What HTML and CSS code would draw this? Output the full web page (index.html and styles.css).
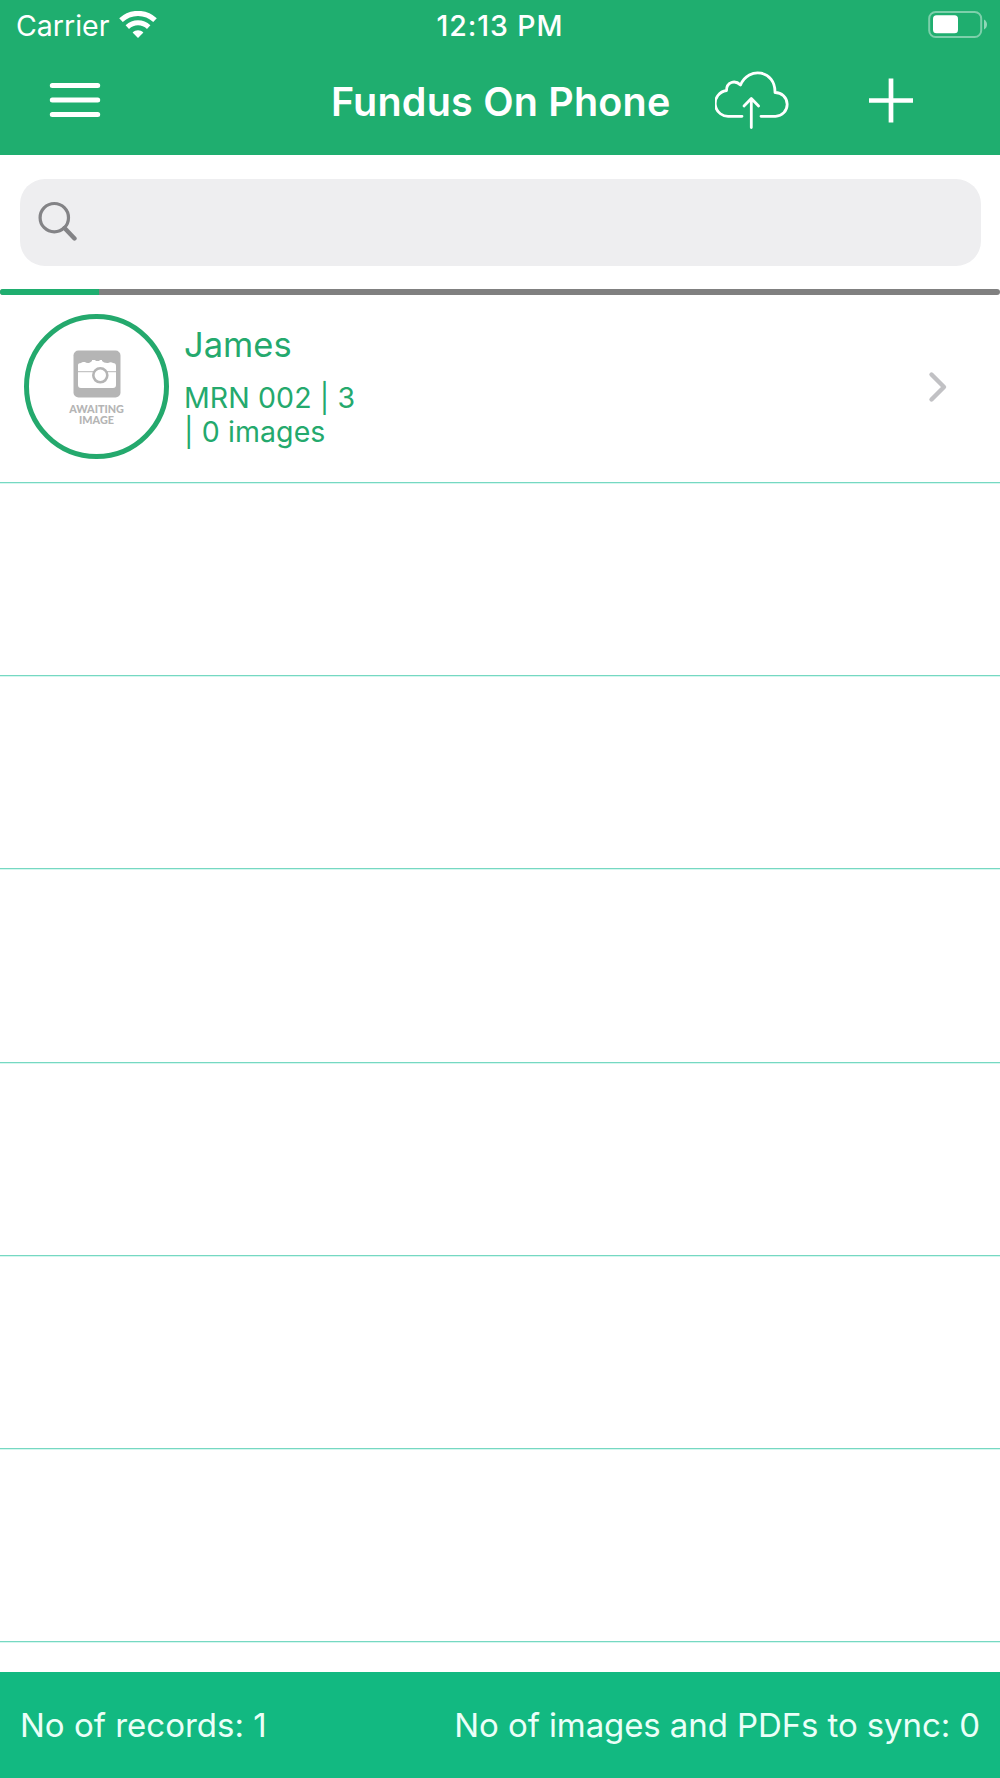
FILE: index.html
```html
<!DOCTYPE html>
<html lang="en">
<head>
<meta charset="utf-8">
<title>Fundus On Phone</title>
<link rel="stylesheet" href="styles.css">
</head>
<body>
<header class="header">
  <div class="status">
    <div class="status-left">
      <span class="carrier">Carrier</span>
      <svg class="wifi" width="38" height="28" viewBox="0 0 38 28" fill="none" stroke="#fff">
        <path d="M2 9.200C11.500 0.200 26.500 0.200 36 9.200" stroke-width="5.200"/>
        <path d="M8.300 16.200C14.500 10.400 23.500 10.400 29.700 16.200" stroke-width="5"/>
        <path d="M13.600 21.400C16.700 18.600 21.300 18.600 24.400 21.400L19 27Z" fill="#fff" stroke="none"/>
      </svg>
    </div>
    <span class="time">12:13 PM</span>
    <svg class="battery" width="60" height="30" viewBox="0 0 60 30">
      <rect x="2.200" y="2" width="52" height="25" rx="6.500" fill="none" stroke="#fff" stroke-opacity=".42" stroke-width="2"/>
      <rect x="6" y="5.300" width="25" height="18" rx="3.500" fill="#fff"/>
      <path d="M57 9.500C61 11.500 61 17.500 57 19.500Z" fill="#fff" fill-opacity=".5"/>
    </svg>
  </div>
  <nav class="nav">
    <button class="icon-button" aria-label="Menu">
      <svg width="52" height="36" viewBox="0 0 52 36" stroke="#fff" stroke-width="5" stroke-linecap="round">
        <path d="M3.300 3.500H48.700M3.300 18H48.700M3.300 32.500H48.700"/>
      </svg>
    </button>
    <h1 class="title">Fundus On Phone</h1>
    <div class="actions">
      <button class="icon-button" aria-label="Upload">
        <svg width="76" height="60" viewBox="0 0 76 60" fill="none" stroke="#fff" stroke-width="2.800" stroke-linecap="round" stroke-linejoin="round">
          <path d="M27 46.300H15A13 13 0 0 1 11.500 20.500C11.500 12 20 9.500 25.500 15C33.500 -4 60.500 0 60 22.500A11.900 11.900 0 0 1 60.500 46.300H46"/>
          <path d="M36.300 57.500V29M29 36L36.300 28.500L43.600 36"/>
        </svg>
      </button>
      <button class="icon-button" aria-label="Add">
        <svg width="46" height="46" viewBox="0 0 46 46" stroke="#fff" stroke-width="4.700">
          <path d="M1 23.500H45M23 1.500V45.500"/>
        </svg>
      </button>
    </div>
  </nav>
</header>
<div class="search">
  <svg width="40" height="40" viewBox="0 0 40 40" fill="none" stroke="#838386">
    <circle cx="16.300" cy="16.700" r="14.200" stroke-width="3.200"/>
    <path d="M26.500 27L36.500 37.500" stroke-width="4.400" stroke-linecap="round"/>
  </svg>
</div>
<div class="progress"><div class="progress-fill"></div></div>
<main class="list">
  <article class="row record">
    <div class="avatar">
      <svg width="48" height="48" viewBox="0 0 48 48">
        <rect width="47" height="47" rx="5" x=".5" y=".5" fill="#b5b5b5"/>
        <path d="M5 15Q5 13 8 13Q9 11.500 12 12Q13 13.300 16 13Q18 12 19 11V10H22L23 11H26L27 10H29V11Q31 13.300 35 13Q38 11.500 40 13Q43 13 43 16V35Q43 38 40 38H8Q5 38 5 35Z" fill="#fff"/>
        <path d="M5 21.700H43" stroke="#c5c5c5" stroke-width="1.200"/>
        <circle cx="27.300" cy="25.300" r="7" fill="#fff" stroke="#b5b5b5" stroke-width="2.600"/>
      </svg>
      <div class="await">
        <div>AWAITING</div>
        <div>IMAGE</div>
      </div>
    </div>
    <div class="details">
      <div class="name">James</div>
      <div class="meta">MRN 002 | 3<br>| 0 images</div>
    </div>
    <svg class="chevron" width="20" height="32" viewBox="0 0 20 32" fill="none" stroke="#c1c1c4" stroke-width="4.400" stroke-linecap="round" stroke-linejoin="round">
      <path d="M3.500 3.500L16 16L3.500 28.500"/>
    </svg>
  </article>
  <div class="row"></div>
  <div class="row"></div>
  <div class="row"></div>
  <div class="row"></div>
  <div class="row"></div>
  <div class="row"></div>
</main>
<footer class="footer">
  <span class="records">No of records: 1</span>
  <span class="sync">No of images and PDFs to sync: 0</span>
</footer>
</body>
</html>
```
FILE: styles.css
```css
* { box-sizing: border-box; }
body {
  margin: 0;
  height: 1778px;
  display: flex;
  flex-direction: column;
  overflow: hidden;
  background: #fff;
  font-family: Inter, "Liberation Sans", sans-serif;
}
svg { display: block; flex: none; }
.header { height: 155.300px; background: #1fae6f; color: #fff; flex: none; }
.status {
  height: 50px;
  padding: 0 13px 0 16px;
  display: grid;
  grid-template-columns: 1fr auto 1fr;
  align-items: center;
}
.status-left { display: flex; align-items: center; gap: 10px; }
.carrier { font-size: 28.500px; }
.time { margin: 0 3px 0 0; font-size: 28.500px; font-weight: 500; letter-spacing: .9px; }
.battery { justify-self: end; margin-top: -1px; }
.nav {
  height: 100px;
  padding: 0 86px 0 49px;
  display: flex;
  align-items: center;
}
.icon-button { padding: 0; border: 0; background: none; }
.title {
  margin: 4px 0 0 230px;
  font-size: 39.500px;
  font-weight: 600;
  letter-spacing: .2px;
  white-space: nowrap;
}
.actions { display: flex; align-items: center; gap: 77px; margin-left: auto; }
.search {
  flex: none;
  height: 87px;
  margin: 23.700px 19.500px 0;
  padding: 0 18px 2px;
  border-radius: 25px;
  background: #eeeef0;
  display: flex;
  align-items: center;
}
.progress { flex: none; height: 6px; margin-top: 23px; border-radius: 3px; background: #808080; overflow: hidden; }
.progress-fill { width: 9.900%; height: 100%; background: #1fae6f; }
.list { flex: 1; min-height: 0; overflow: hidden; }
.row { height: 193.200px; border-bottom: 1px solid #76d8c2; box-shadow: 0 1px 0 #d5f7ef; }
.record {
  height: 188px;
  padding: 0 52px 0 24px;
  display: flex;
  color: #24a96d;
}
.avatar {
  width: 145px;
  height: 145px;
  margin-top: 19px;
  border: 5px solid #24a96d;
  border-radius: 50%;
  display: flex;
  flex-direction: column;
  align-items: center;
  padding-top: 31px;
}
.await {
  margin-top: 5px;
  font: 900 10.800px/11px Lato, sans-serif;
  color: #b5b5b5;
  text-align: center;
}
.details { flex: 1; padding: 28px 0 0 15px; }
.name { font-size: 34.500px; line-height: 44px; }
.meta { margin-top: 14px; font-size: 28.500px; line-height: 34px; letter-spacing: .1px; }
.chevron { align-self: center; margin-top: -2px; }
.footer {
  flex: none;
  height: 106.300px;
  padding: 0 20px;
  background: #12b981;
  color: #eafff8;
  font-size: 33px;
  display: flex;
  align-items: center;
  justify-content: space-between;
}
.sync { letter-spacing: -.1px; }
```
